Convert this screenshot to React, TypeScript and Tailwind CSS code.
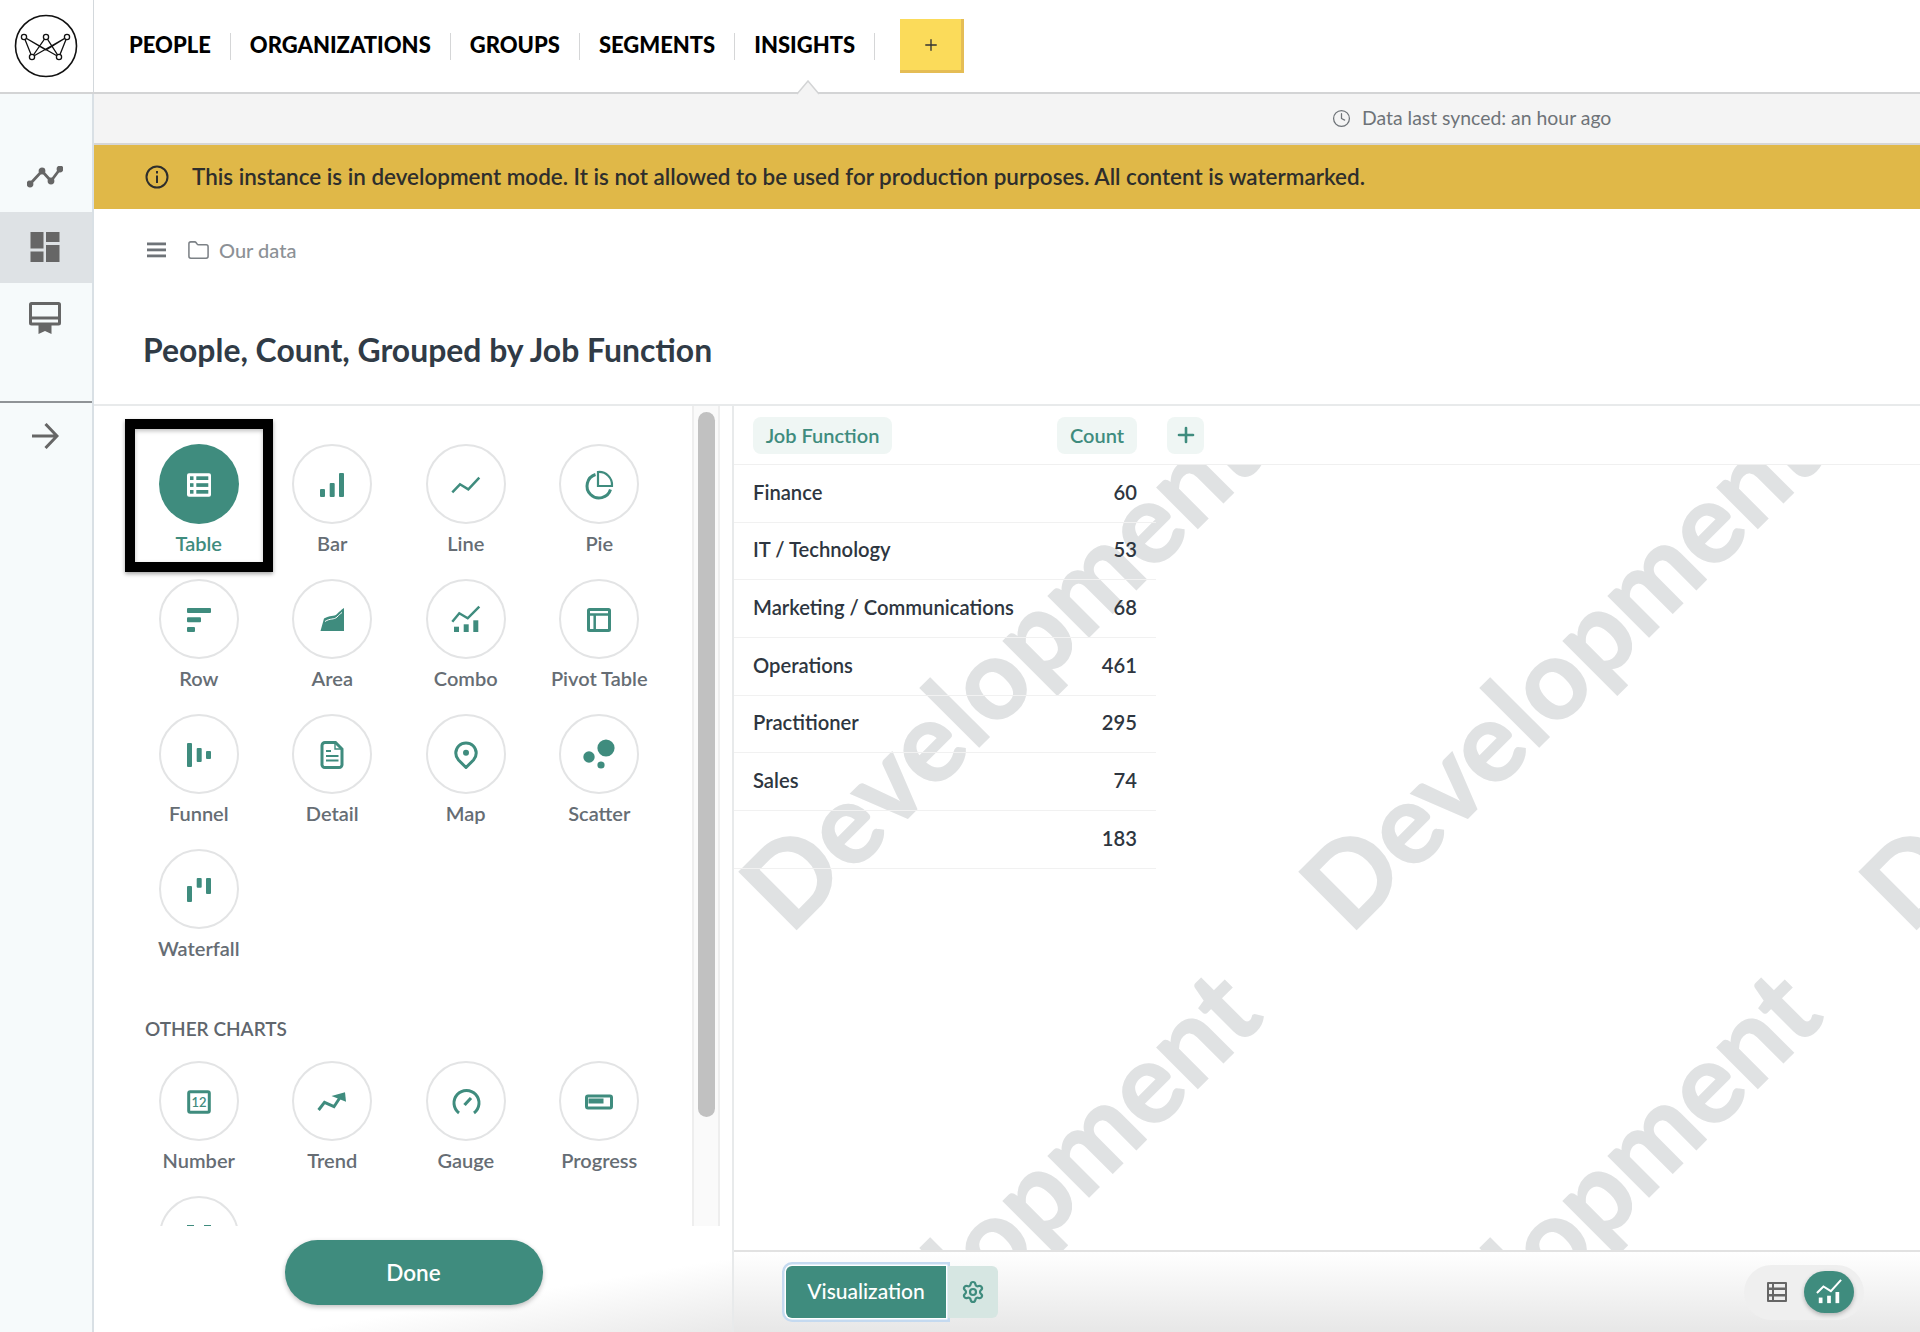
import { Clock, Folder, Plus, Settings } from "lucide-react";
import type { ReactNode } from "react";

const teal = "#3f8c7e";

const Ico = ({ children }: { children: ReactNode }) => (
  <svg width="32" height="32" viewBox="-16 -16 32 32" fill={teal} stroke="none" className="translate-y-px">
    {children}
  </svg>
);

const Line = { fill: "none", stroke: teal, strokeWidth: 2.5 };

const charts: { name: string; icon: ReactNode }[] = [
  { name: "Table", icon: null },
  {
    name: "Bar",
    icon: (
      <>
        <rect x="-12" y="4" width="5" height="8" rx="1" />
        <rect x="-2.3" y="-2" width="5" height="14" rx="1" />
        <rect x="7" y="-12" width="5" height="24" rx="1" />
      </>
    ),
  },
  { name: "Line", icon: <polyline {...Line} points="-13.7,7.3 -6,-0.7 2.3,4.3 13.3,-7.3" /> },
  {
    name: "Pie",
    icon: (
      <>
        <path {...Line} strokeWidth={3} d="M-3.5 -10.5 A12 12 0 1 0 11.5 4.5" />
        <path {...Line} strokeWidth={2.2} d="M-1 -13 A13 13 0 0 1 13 1 H-1 Z" />
      </>
    ),
  },
  {
    name: "Row",
    icon: (
      <>
        <rect x="-12" y="-12" width="24" height="5" rx="1" />
        <rect x="-12" y="-2.7" width="14" height="5" rx="1" />
        <rect x="-12" y="7" width="8" height="5" rx="1" />
      </>
    ),
  },
  {
    name: "Area",
    icon: (
      <>
        <path d="M-11.5 11 L-8 -1.5 C-2 -5 2 -3 5 -6 C8 -9 9 -10 12 -12 V11 Z" />
        <path d="M-7 1.5 C-2 -2 2 0 5 -3 C7 -5 8 -6 10 -7.5" fill="none" stroke="#fff" strokeWidth="1" />
      </>
    ),
  },
  {
    name: "Combo",
    icon: (
      <>
        <polyline {...Line} points="-13.7,1.7 -6.7,-6.7 1.7,-1.7 13.3,-13.3" />
        <rect x="-12" y="6.7" width="5" height="5.3" />
        <rect x="-2.3" y="4.3" width="5" height="7.7" />
        <rect x="7.3" y="0.3" width="5" height="11.7" />
      </>
    ),
  },
  {
    name: "Pivot Table",
    icon: (
      <>
        <rect {...Line} strokeWidth={3} x="-10.5" y="-10.5" width="21" height="21" rx="1" />
        <path {...Line} d="M-11 -5.5 H11 M-4.3 -5.5 V11" />
      </>
    ),
  },
  {
    name: "Funnel",
    icon: (
      <>
        <rect x="-12" y="-12" width="5" height="24" rx="1" />
        <rect x="-2.3" y="-7" width="5" height="14" rx="1" />
        <rect x="7" y="-4" width="5" height="8" rx="1" />
      </>
    ),
  },
  {
    name: "Detail",
    icon: (
      <>
        <path {...Line} strokeWidth={3} d="M-7 -12.5 H3.5 L10 -6 V9 A3 3 0 0 1 7 12.5 H-7 A3 3 0 0 1 -10 9 V-9.5 A3 3 0 0 1 -7 -12.5 Z" />
        <path {...Line} strokeWidth={2} d="M-6 -4 H-1 M-6 1 H6.5 M-6 5.5 H6.5" />
        <path {...Line} strokeWidth={1.4} d="M3 -12 V-6 H9.5" />
      </>
    ),
  },
  {
    name: "Map",
    icon: (
      <>
        <path {...Line} strokeWidth={3} d="M0 12.5 L-7.5 5 A10.2 10.2 0 1 1 7.5 5 Z" strokeLinejoin="round" />
        <circle cx="0" cy="-2.3" r="3" />
      </>
    ),
  },
  {
    name: "Scatter",
    icon: (
      <>
        <circle cx="7" cy="-7" r="8.6" />
        <circle cx="-10" cy="2" r="5.7" />
        <circle cx="2" cy="10" r="3.6" />
      </>
    ),
  },
  {
    name: "Waterfall",
    icon: (
      <>
        <rect x="-12" y="-4" width="5" height="16" rx="1" />
        <rect x="-2.3" y="-12" width="5" height="9.7" rx="1" />
        <rect x="7" y="-12" width="5" height="16" rx="1" />
      </>
    ),
  },
];

const others: { name: string; icon: ReactNode }[] = [
  {
    name: "Number",
    icon: (
      <>
        <rect {...Line} strokeWidth={3} x="-10.3" y="-10.3" width="20.6" height="20.6" rx="1.5" />
        <text x="0" y="5" textAnchor="middle" fontSize="13" fontWeight="600" fontFamily="Lato, sans-serif">
          12
        </text>
      </>
    ),
  },
  {
    name: "Trend",
    icon: (
      <>
        <polyline {...Line} strokeWidth={3} points="-13.4,8 -7.5,0.3 2,4.7 9,-6" />
        <polygon points="-0.5,-6 13,-9.7 14,-0.3" />
      </>
    ),
  },
  {
    name: "Gauge",
    icon: (
      <>
        <path {...Line} strokeWidth={3} d="M-7 11 A12.5 12.5 0 1 1 8 11" />
        <path {...Line} strokeWidth={3.2} d="M-1.5 3 L5 -4" />
      </>
    ),
  },
  {
    name: "Progress",
    icon: (
      <>
        <rect {...Line} strokeWidth={3} x="-12.5" y="-6" width="25" height="12" rx="1.5" />
        <rect x="-10.5" y="-3.5" width="15" height="5" />
      </>
    ),
  },
  {
    name: "",
    icon: (
      <>
        <rect x="-12" y="-12" width="7" height="3" />
        <rect x="5" y="-12" width="7" height="3" />
      </>
    ),
  },
];

const rows: [string, string][] = [
  ["Finance", "60"],
  ["IT / Technology", "53"],
  ["Marketing / Communications", "68"],
  ["Operations", "461"],
  ["Practitioner", "295"],
  ["Sales", "74"],
  ["", "183"],
];

const navItems = ["PEOPLE", "ORGANIZATIONS", "GROUPS", "SEGMENTS", "INSIGHTS"];

// watermark centres, relative to the clipped layer under the table head
const marks = [
  [264, 202],
  [824, 202],
  [1384, 202],
  [264, 762],
  [824, 762],
  [1384, 762],
];

const ChartCell = ({ name, icon }: { name: string; icon: ReactNode }) => (
  <div className="flex h-[135px] w-[133.5px] flex-col items-center">
    <div className="flex size-[80px] items-center justify-center rounded-full border-2 border-[#e3e4e5] bg-white">
      <Ico>{icon}</Ico>
    </div>
    <div className="mt-[6px] whitespace-nowrap text-center text-[20px] leading-[26px] font-semibold text-[#666d74]">{name}</div>
  </div>
);

const TableCell = () => (
  <div className="relative flex h-[135px] w-[133.5px] flex-col items-center">
    <div className="flex size-[80px] items-center justify-center rounded-full bg-[#3f8c7e]">
      <svg width="32" height="32" viewBox="-16 -16 32 32" className="translate-y-px">
        <rect x="-12" y="-11.7" width="24" height="23.4" rx="2" fill="#fff" />
        {[-8.7, -1.8, 5].map((y) => (
          <g key={y} fill={teal}>
            <rect x="-9" y={y} width="3.5" height="3.7" />
            <rect x="-2.7" y={y} width="12" height="3.7" />
          </g>
        ))}
      </svg>
    </div>
    <div className="mt-[6px] text-[20px] leading-[26px] font-semibold text-[#3f8c7e]">Table</div>
    <div className="absolute -left-[7px] -right-[7px] -top-[25px] h-[153px] border-[10px] border-black shadow-[0_2px_4px_rgba(0,0,0,0.35),inset_0_2px_4px_rgba(0,0,0,0.25)]" />
  </div>
);

export default function App() {
  return (
    <div className="flex h-[1332px] w-full flex-col overflow-hidden bg-white font-['Lato',sans-serif]">
      {/* top nav */}
      <div className="relative flex h-[94px] shrink-0 items-center border-b-2 border-[#d3d4d5] bg-white">
        <div className="flex h-full w-[94px] items-center justify-center border-r border-[#d3d8dc] pr-[2px]">
          <svg width="64" height="64" viewBox="0 0 64 64" fill="none" stroke="#111" strokeWidth="1.3">
            <circle cx="32" cy="32" r="30.5" strokeWidth="1.6" />
            <path d="M10 23 L18 43 L32 23 L45 43 L53 23 M10 23 L45 43 M53 23 L18 43 M32 23 L18 43 M32 23 L45 43 M10 23 L32 36 L53 23" />
            {[
              [10, 23],
              [32, 23],
              [53, 23],
              [18, 43],
              [45, 43],
            ].map(([x, y]) => (
              <circle key={x} cx={x} cy={y} r="2.6" fill="#fff" />
            ))}
          </svg>
        </div>
        <div className="flex items-center pl-[35px]">
          {navItems.map((item) => (
            <div key={item} className="flex items-center">
              <span className="-mt-[2px] text-[22px] font-black leading-none text-black">{item}</span>
              <span className="mx-[19px] h-[27px] w-px bg-[#d5d6d7]" />
            </div>
          ))}
          <button className="ml-[6px] flex h-[54px] w-[64px] items-center justify-center border-r-[3px] border-b-[3px] border-[#e5bd55] bg-[#fbdb5a] text-[#333]">
            <Plus size={18} strokeWidth={1.8} />
          </button>
        </div>
        {/* caret under the active tab */}
        <svg className="absolute left-[796px] top-[80px]" width="24" height="15" viewBox="0 0 24 15">
          <path d="M1 14 L12 1 L23 14" fill="#f4f4f4" stroke="#d3d4d5" strokeWidth="1.5" />
        </svg>
      </div>

      <div className="flex min-h-0 flex-1">
        {/* side rail */}
        <div className="flex w-[94px] shrink-0 flex-col border-r-2 border-[#d9e0e5] bg-[#f6fafb]">
          <div className="h-[47px]" />
          <div className="flex h-[71px] items-center justify-center">
            <svg width="36" height="22" viewBox="0 0 36 22" fill="#666" stroke="#666" strokeWidth="2.8" className="-translate-x-px">
              <polyline points="3,18 15,5 24,15 33,3" fill="none" />
              <circle cx="3" cy="18" r="2" />
              <circle cx="15" cy="5" r="2" />
              <circle cx="24" cy="15" r="2" />
              <circle cx="33" cy="3" r="2" />
            </svg>
          </div>
          <div className="flex h-[71px] items-center justify-center bg-[#dee2e5]">
            <svg width="30" height="30" viewBox="0 0 30 30" fill="#666" className="-translate-x-px -translate-y-px">
              <rect x="0.5" y="0" width="13" height="16.5" />
              <rect x="16" y="0" width="13.5" height="10" />
              <rect x="0.5" y="19.5" width="13" height="10.5" />
              <rect x="16" y="13" width="13.5" height="17" />
            </svg>
          </div>
          <div className="flex h-[71px] items-center justify-center">
            <svg width="34" height="32" viewBox="0 0 34 32" fill="#666" className="-translate-x-px -translate-y-px">
              <path fillRule="evenodd" d="M3.5 0 H30.5 A2.5 2.5 0 0 1 33 2.5 V21 A2.5 2.5 0 0 1 30.5 23.5 H3.5 A2.5 2.5 0 0 1 1 21 V2.5 A2.5 2.5 0 0 1 3.5 0 Z M4 3 V14.5 H30 V3 Z M4 17.5 V20.5 H30 V17.5 Z" />
              <path d="M10.5 23 H23.5 V32 L17 29 L10.5 32 Z" />
            </svg>
          </div>
          <div className="h-[47px]" />
          <div className="flex h-[72px] items-center justify-center border-t-2 border-[#8f9396]">
            <svg width="28" height="26" viewBox="0 0 28 26" fill="none" stroke="#666" strokeWidth="3" className="-translate-x-px -translate-y-[2px]">
              <path d="M1 13 H26 M14.5 1 L26 13 L14.5 25" />
            </svg>
          </div>
        </div>

        <div className="flex min-w-0 flex-1 flex-col">
          <div className="flex h-[51px] shrink-0 items-center border-b-2 border-[#d6d6d6] bg-[#f4f4f4] pl-[1238px] text-[19.4px] text-[#6e7378]">
            <Clock size={19} strokeWidth={1.6} />
            <span className="ml-[11px] -translate-y-px">Data last synced: an hour ago</span>
          </div>
          <div className="flex h-[64px] shrink-0 items-center bg-[#e0b848] pl-[50px] text-[22.45px] font-semibold text-[#2e2e2c]">
            <svg width="26" height="26" viewBox="0 0 26 26" fill="none" stroke="#2e2e2c" strokeWidth="2">
              <circle cx="13" cy="13" r="10.5" />
              <path d="M13 11.5 V19 M13 7 V9.5" />
            </svg>
            <span className="ml-[22px]">This instance is in development mode. It is not allowed to be used for production purposes. All content is watermarked.</span>
          </div>
          <div className="flex h-[197px] shrink-0 flex-col border-b-2 border-[#e8eaeb] pl-[49px]">
            <div className="mt-[28px] flex h-[26px] items-center text-[20px] text-[#8c9196]">
              <svg width="20" height="16" viewBox="0 0 20 16" fill="#6e7378" className="ml-[4px]">
                <rect x="0" y="0.5" width="19" height="2.8" />
                <rect x="0" y="6.5" width="19" height="2.8" />
                <rect x="0" y="12.5" width="19" height="2.8" />
              </svg>
              <Folder size={23} strokeWidth={1.6} className="ml-[20px] text-[#7c8186]" />
              <span className="ml-[9px] font-medium">Our data</span>
            </div>
            <h1 className="mt-[67px] text-[31.9px] leading-[40px] font-bold text-[#303b46]">People, Count, Grouped by Job Function</h1>
          </div>

          <div className="flex min-h-0 flex-1">
            {/* chart picker */}
            <div className="flex w-[640px] shrink-0 flex-col border-r-2 border-[#e8eaeb]">
              <div className="flex h-[820px] shrink-0">
                <div className="w-[598px] overflow-hidden pl-[38px] pt-[38px]">
                  <div className="grid grid-cols-[repeat(4,133.5px)]">
                    <TableCell />
                    {charts.slice(1).map((c) => (
                      <ChartCell key={c.name} name={c.name} icon={c.icon} />
                    ))}
                  </div>
                  <div className="ml-[13px] mt-[32px] h-[26px] text-[19px] leading-[26px] font-semibold text-[#5f666d]">OTHER CHARTS</div>
                  <div className="mt-[19px] grid grid-cols-[repeat(4,133.5px)]">
                    {others.map((c) => (
                      <ChartCell key={c.name} name={c.name} icon={c.icon} />
                    ))}
                  </div>
                </div>
                <div className="w-[28px] border-x-2 border-[#eeeeee] bg-[#fafafa] pl-[4px] pt-[6px]">
                  <div className="h-[705px] w-[17px] rounded-full bg-[#c1c1c1]" />
                </div>
              </div>
              <div className="flex flex-1 items-start justify-center bg-gradient-to-br from-white from-65% to-[#e9e9e9] pl-[1px] pt-[14px]">
                <button className="h-[65px] w-[258px] rounded-full bg-[#3f8c7e] text-[22.5px] font-semibold text-white shadow-[0_2px_5px_rgba(0,0,0,0.25)]">Done</button>
              </div>
            </div>

            {/* result table + footer */}
            <div className="flex min-w-0 flex-1 flex-col">
              <div className="relative min-h-0 flex-1">
                <div className="absolute inset-x-0 bottom-0 top-[59px] overflow-hidden">
                  {marks.map(([x, y]) => (
                    <span
                      key={`${x}-${y}`}
                      className="absolute -translate-x-1/2 -translate-y-1/2 -rotate-45 whitespace-nowrap text-[112px] leading-none font-bold text-[#e0e2e3] [-webkit-text-stroke:1.5px_#e0e2e3]"
                      style={{ left: x, top: y }}
                    >
                      Development
                    </span>
                  ))}
                </div>
                <div className="relative flex h-[59px] items-center border-b border-[#f0f0f0] pl-[19px] text-[20px] font-semibold text-[#3f8c7e]">
                  <div className="flex h-[37px] w-[139px] items-center justify-center rounded-lg bg-[#eff6f4]">Job Function</div>
                  <div className="ml-[165px] flex h-[37px] w-[80px] items-center justify-center rounded-lg bg-[#eff6f4]">Count</div>
                  <div className="ml-[30px] flex h-[37px] w-[37px] items-center justify-center rounded-lg bg-[#eff6f4]">
                    <Plus size={24} strokeWidth={2.6} />
                  </div>
                </div>
                <div className="relative w-[422px]">
                  {rows.map(([label, value]) => (
                    <div key={value} className="flex h-[57.7px] items-center justify-between border-b border-[#f1f1f1] pb-[3px] pl-[19px] pr-[19px] text-[20.2px] font-semibold text-[#2e3640]">
                      <span>{label}</span>
                      <span>{value}</span>
                    </div>
                  ))}
                </div>
              </div>
              <div className="flex h-[82px] shrink-0 items-center justify-between border-t-2 border-[#e2e2e2] bg-gradient-to-b from-white to-[#e7e7e7] pl-[52px] pr-[56px]">
                <div className="flex items-center">
                  <button className="h-[52px] w-[160px] rounded-l-md bg-[#3f8c7e] pb-[2px] text-[21px] font-medium text-white shadow-[0_0_0_1.5px_#fff,0_0_0_4px_#c5daf0]">Visualization</button>
                  <div className="ml-[2px] flex h-[52px] w-[50px] items-center justify-center rounded-r-md bg-[#d6e6e2] text-[#3f8c7e]">
                    <Settings size={24} strokeWidth={2.2} />
                  </div>
                </div>
                <div className="flex h-[55px] w-[120px] items-center justify-end rounded-full bg-[#efefef] pr-[10px]">
                  <svg width="20" height="20" viewBox="0 0 20 20" fill="#666" className="mr-[17px]">
                    <path fillRule="evenodd" d="M1 0 H19 A1 1 0 0 1 20 1 V19 A1 1 0 0 1 19 20 H1 A1 1 0 0 1 0 19 V1 A1 1 0 0 1 1 0 Z M2 2 V5.5 H5 V2 Z M7 2 V5.5 H18 V2 Z M2 8 V12 H5 V8 Z M7 8 V12 H18 V8 Z M2 14.5 V18 H5 V14.5 Z M7 14.5 V18 H18 V14.5 Z" />
                  </svg>
                  <div className="flex h-[42px] w-[50px] items-center justify-center rounded-full bg-[#3f8c7e] shadow-[0_2px_4px_rgba(0,0,0,0.25)]">
                    <svg width="26" height="26" viewBox="-14 -14 28 28" fill="#fff">
                      <polyline points="-13,1 -6,-6 2,-1 13,-13" fill="none" stroke="#fff" strokeWidth="2.2" />
                      <rect x="-11" y="6" width="4" height="6" />
                      <rect x="-2" y="4" width="4" height="8" />
                      <rect x="7" y="0" width="4" height="12" />
                    </svg>
                  </div>
                </div>
              </div>
            </div>
          </div>
        </div>
      </div>
    </div>
  );
}
